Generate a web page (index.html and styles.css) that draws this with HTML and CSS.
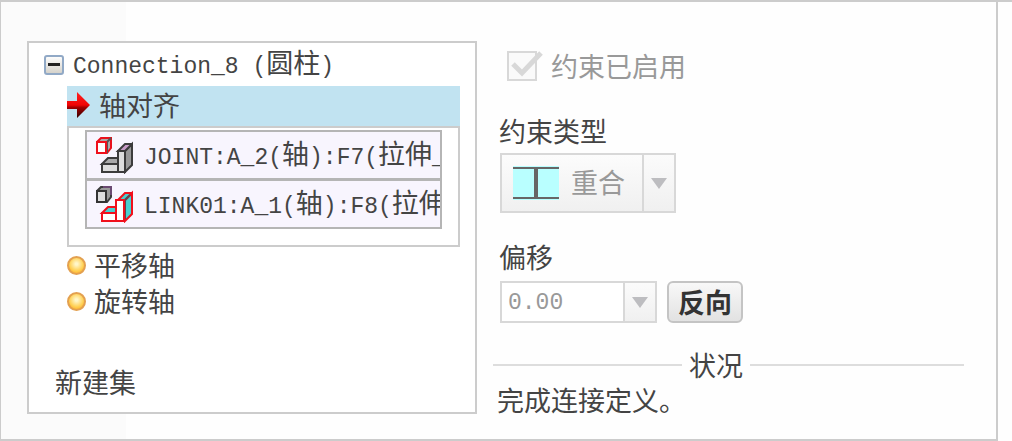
FILE: index.html
```html
<!DOCTYPE html>
<html lang="zh-CN">
<head>
  <meta charset="UTF-8">
  <meta name="viewport" content="width=device-width, initial-scale=1.0">
  <title>约束</title>
  <link rel="stylesheet" href="styles.css">
</head>
<body>
  <main class="panel">
    <!-- Constraint sets -->
    <section class="tree">
      <div class="set-title">
        <button class="toggle" type="button" aria-label="折叠">
          <svg width="20" height="20" viewBox="0 0 20 20">
            <defs>
              <linearGradient id="box" x1="0" y1="0" x2="0" y2="1">
                <stop offset="0" stop-color="#fff"/>
                <stop offset="1" stop-color="#d3d0c8"/>
              </linearGradient>
            </defs>
            <rect x="1" y="1" width="18" height="18" rx="2" fill="url(#box)" stroke="#91a9c6" stroke-width="2"/>
            <rect x="4" y="8" width="12" height="3" fill="#222"/>
          </svg>
        </button>
        <span class="latin">Connection_8 (<span class="cjk">圆柱</span>)</span>
      </div>

      <ul class="constraints">
        <li>
          <div class="constraint selected">
            <svg class="arrow" width="24" height="28" viewBox="0 0 24 28">
              <defs>
                <linearGradient id="red" x1="0" y1="0" x2="0" y2="1">
                  <stop offset="0" stop-color="#ff2020"/>
                  <stop offset="0.5" stop-color="#f00505"/>
                  <stop offset="0.6" stop-color="#a00000"/>
                  <stop offset="1" stop-color="#300"/>
                </linearGradient>
              </defs>
              <path d="M0 10H10V1L23 14L10 27V18H0Z" fill="url(#red)"/>
            </svg>
            <span>轴对齐</span>
          </div>
          <ul class="refs">
            <li class="ref">
              <svg class="part" width="38" height="38" viewBox="0 0 38 38">
                <path d="M2 6L6 2H16V12L12 17H2Z" fill="#aaa" stroke="#e8101c" stroke-width="2"/>
                <path d="M12 17V6L16 2" fill="none" stroke="#555" stroke-width="2"/>
                <path d="M2 6H11V17H2Z" fill="#fff" stroke="#f0101c" stroke-width="2"/>
                <path d="M7 28L13 22H23V28Z" fill="#aaa" stroke="#3c3c3c" stroke-width="2"/>
                <path d="M7 28H23V36H7Z" fill="#ddd" stroke="#3c3c3c" stroke-width="2"/>
                <path d="M30 15L37 8V29L30 36Z" fill="#999" stroke="#3c3c3c" stroke-width="2"/>
                <path d="M23 15L30 8H37L30 15Z" fill="#c79bc7" stroke="#3c3c3c" stroke-width="2"/>
                <path d="M23 15H30V36H23Z" fill="#ddd" stroke="#3c3c3c" stroke-width="2"/>
              </svg>
              <span class="latin">JOINT:A_2(<span class="cjk">轴</span>):F7(<span class="cjk">拉伸</span>_</span>
            </li>
            <li class="ref">
              <svg class="part" width="38" height="38" viewBox="0 0 38 38">
                <path d="M2 6L6 2H16V12L12 17H2Z" fill="#999" stroke="#3c3c3c" stroke-width="2"/>
                <path d="M8 2H16V10" fill="none" stroke="#6a4a72" stroke-width="2"/>
                <path d="M2 6H11V17H2Z" fill="#ddd" stroke="#333" stroke-width="2"/>
                <path d="M7 28L13 22H23V28Z" fill="#48d0d0" stroke="#f0101c" stroke-width="2"/>
                <path d="M7 28H23V36H7Z" fill="#fff" stroke="#f0101c" stroke-width="2"/>
                <path d="M30 15L37 8V29L30 36Z" fill="#48d0d0" stroke="#f0101c" stroke-width="2"/>
                <path d="M23 15L30 8H37L30 15Z" fill="#48d0d0" stroke="#f0101c" stroke-width="2"/>
                <path d="M35 10L30 15V34" fill="none" stroke="#5a4a50" stroke-width="2"/>
                <path d="M21 15H29V36H21Z" fill="#fff" stroke="#f0101c" stroke-width="2"/>
              </svg>
              <span class="latin">LINK01:A_1(<span class="cjk">轴</span>):F8(<span class="cjk">拉伸</span></span>
            </li>
          </ul>
        </li>
        <li class="constraint"><span class="dot"></span>平移轴</li>
        <li class="constraint"><span class="dot"></span>旋转轴</li>
      </ul>

      <button class="new-set" type="button">新建集</button>
    </section>

    <!-- Constraint settings -->
    <form class="settings">
      <label class="enabled">
        <span class="tick">
          <input type="checkbox" checked disabled>
          <svg class="check" width="34" height="30" viewBox="0 0 34 30">
            <path d="M4 13L13 22L32 2" fill="none" stroke="#d8d8d8" stroke-width="5"/>
          </svg>
        </span>
        约束已启用
      </label>

      <label class="title" for="type">约束类型</label>
      <div class="type-box">
        <svg class="coincident" width="46" height="34" viewBox="0 0 46 34">
          <rect width="46" height="34" fill="#b9ffff"/>
          <path d="M0 2H46M0 32H46" stroke="#666" stroke-width="2"/>
          <path d="M23 2V32" stroke="#666" stroke-width="4"/>
        </svg>
        <select class="type" id="type" disabled>
          <option>重合</option>
        </select>
        <span class="drop"></span>
      </div>

      <label class="title offset-title" for="offset">偏移</label>
      <div class="offset-row">
        <div class="combo">
          <input class="offset" id="offset" type="text" value="0.00" disabled>
          <button class="drop" type="button" aria-label="偏移列表" disabled></button>
        </div>
        <button class="flip" type="button">反向</button>
      </div>

      <div class="status-title">状况</div>
      <p class="status">完成连接定义。</p>
    </form>
  </main>
</body>
</html>
```
FILE: styles.css
```css
* {
  box-sizing: border-box;
}
body {
  margin: 0;
  border-top: 2px solid #ccc;
  background: #fefefe;
  color: #444;
  font-family: "Noto Sans CJK SC", sans-serif;
  font-size: 27px;
  line-height: 36px;
}
button, input, select {
  font: inherit;
  color: inherit;
}
ul {
  list-style: none;
  margin: 0;
  padding: 0;
}
.panel {
  display: grid;
  grid-template-columns: minmax(0, 450fr) minmax(0, 471fr);
  column-gap: 16px;
  align-items: start;
  margin-right: 14px;
  padding: 39px 32px 21px 26px;
  border: 2px solid #ccc;
  border-top: none;
  border-left-width: 1px;
  background: linear-gradient(to right, #fbfbfb 125px, #fefefe 125px);
}
.latin {
  font-family: "Liberation Mono", "Noto Sans CJK SC", monospace;
  font-size: 23px;
  white-space: pre;
}
.cjk {
  font-family: "Noto Sans CJK SC", sans-serif;
  font-size: 27px;
}

/* Tree */
.tree {
  border: 2px solid #ccc;
  background: #fff;
  padding-bottom: 12px;
}
.set-title {
  display: flex;
  align-items: center;
  gap: 9px;
  height: 43px;
  padding-left: 15px;
}
.toggle {
  display: flex;
  padding: 0;
  border: none;
  background: none;
}
.constraints {
  margin: 0 15px 0 38px;
}
.constraint {
  display: flex;
  align-items: center;
  gap: 8px;
}
.selected {
  height: 40px;
  padding-bottom: 2px;
  background: #c1e3f1;
}
.arrow, .part, .coincident {
  flex: none;
}
.refs {
  padding: 2px 16px 16px;
  border: 2px solid #ccc;
}
.ref {
  display: flex;
  align-items: center;
  gap: 11px;
  height: 50px;
  padding: 0 0 0 8px;
  border: 2px solid #b5b5b5;
  background: #f8f5fe;
}
.ref + .ref {
  margin-top: -1px;
}
.ref .latin {
  flex: 1;
  min-width: 0;
  line-height: 44px;
  overflow: hidden;
}
.dot {
  width: 19px;
  height: 19px;
  border: 2px solid #e3a050;
  border-radius: 50%;
  background: radial-gradient(circle at 50% 40%, #fff6c8 10%, #ffcf50 60%, #ff9a18 100%);
}
.new-set {
  display: block;
  margin: 45px 0 0 26px;
  padding: 0;
  border: none;
  background: none;
}

/* Settings */
.settings {
  display: flex;
  flex-direction: column;
  align-items: flex-start;
  padding-top: 7px;
}
.enabled {
  display: flex;
  align-items: center;
  gap: 14px;
  margin-left: 14px;
  color: #999;
}
.tick {
  position: relative;
  display: flex;
}
.tick input {
  appearance: none;
  width: 30px;
  height: 30px;
  margin: 0;
  border: 2px solid #d8d8d8;
  background: #fafafa;
}
.check {
  position: absolute;
  left: 2px;
  top: 0;
}
.title {
  margin: 29px 0 4px 6px;
}
.offset-title {
  margin: 26px 0 6px 6px;
}
.type-box, .combo {
  display: flex;
  margin-left: 7px;
  border: 2px solid #d8d8d8;
}
.type-box {
  align-items: center;
  width: 176px;
  height: 60px;
  padding-left: 11px;
  background: linear-gradient(#fcfcfc, #f0f0f0);
}
.type {
  appearance: none;
  flex: 1;
  min-width: 0;
  height: 100%;
  padding: 0 0 2px 12px;
  border: none;
  background: none;
  color: #999;
  opacity: 1;
}
.drop {
  display: flex;
  align-items: center;
  justify-content: center;
  width: 32px;
  height: 100%;
  padding: 0;
  border: none;
  border-left: 2px solid #d8d8d8;
  background: linear-gradient(#fbfbfb, #f0f0f0);
}
.drop::before {
  content: "";
  border: 8px solid transparent;
  border-top: 11px solid #bdbdc0;
  border-bottom: none;
}
.offset-row {
  display: flex;
  gap: 10px;
}
.combo {
  width: 157px;
  height: 42px;
}
.offset {
  flex: 1;
  min-width: 0;
  padding: 2px 0 0 6px;
  border: none;
  background: #fff;
  color: #999;
  font-family: "Liberation Mono", monospace;
  font-size: 23px;
}
.flip {
  width: 76px;
  height: 42px;
  padding: 0;
  border: 2px solid #c4c4c4;
  border-radius: 6px;
  background: linear-gradient(#f8f8f8, #e2e2e2);
  color: #333;
  font-weight: bold;
  line-height: 34px;
}
.status-title {
  display: flex;
  align-items: center;
  align-self: stretch;
  gap: 7px;
  margin-top: 25px;
  line-height: 34px;
}
.status-title::before, .status-title::after {
  content: "";
  flex: 189;
  height: 2px;
  background: #ddd;
}
.status-title::after {
  flex: 214;
}
.status {
  margin: 0 0 0 4px;
}
```
